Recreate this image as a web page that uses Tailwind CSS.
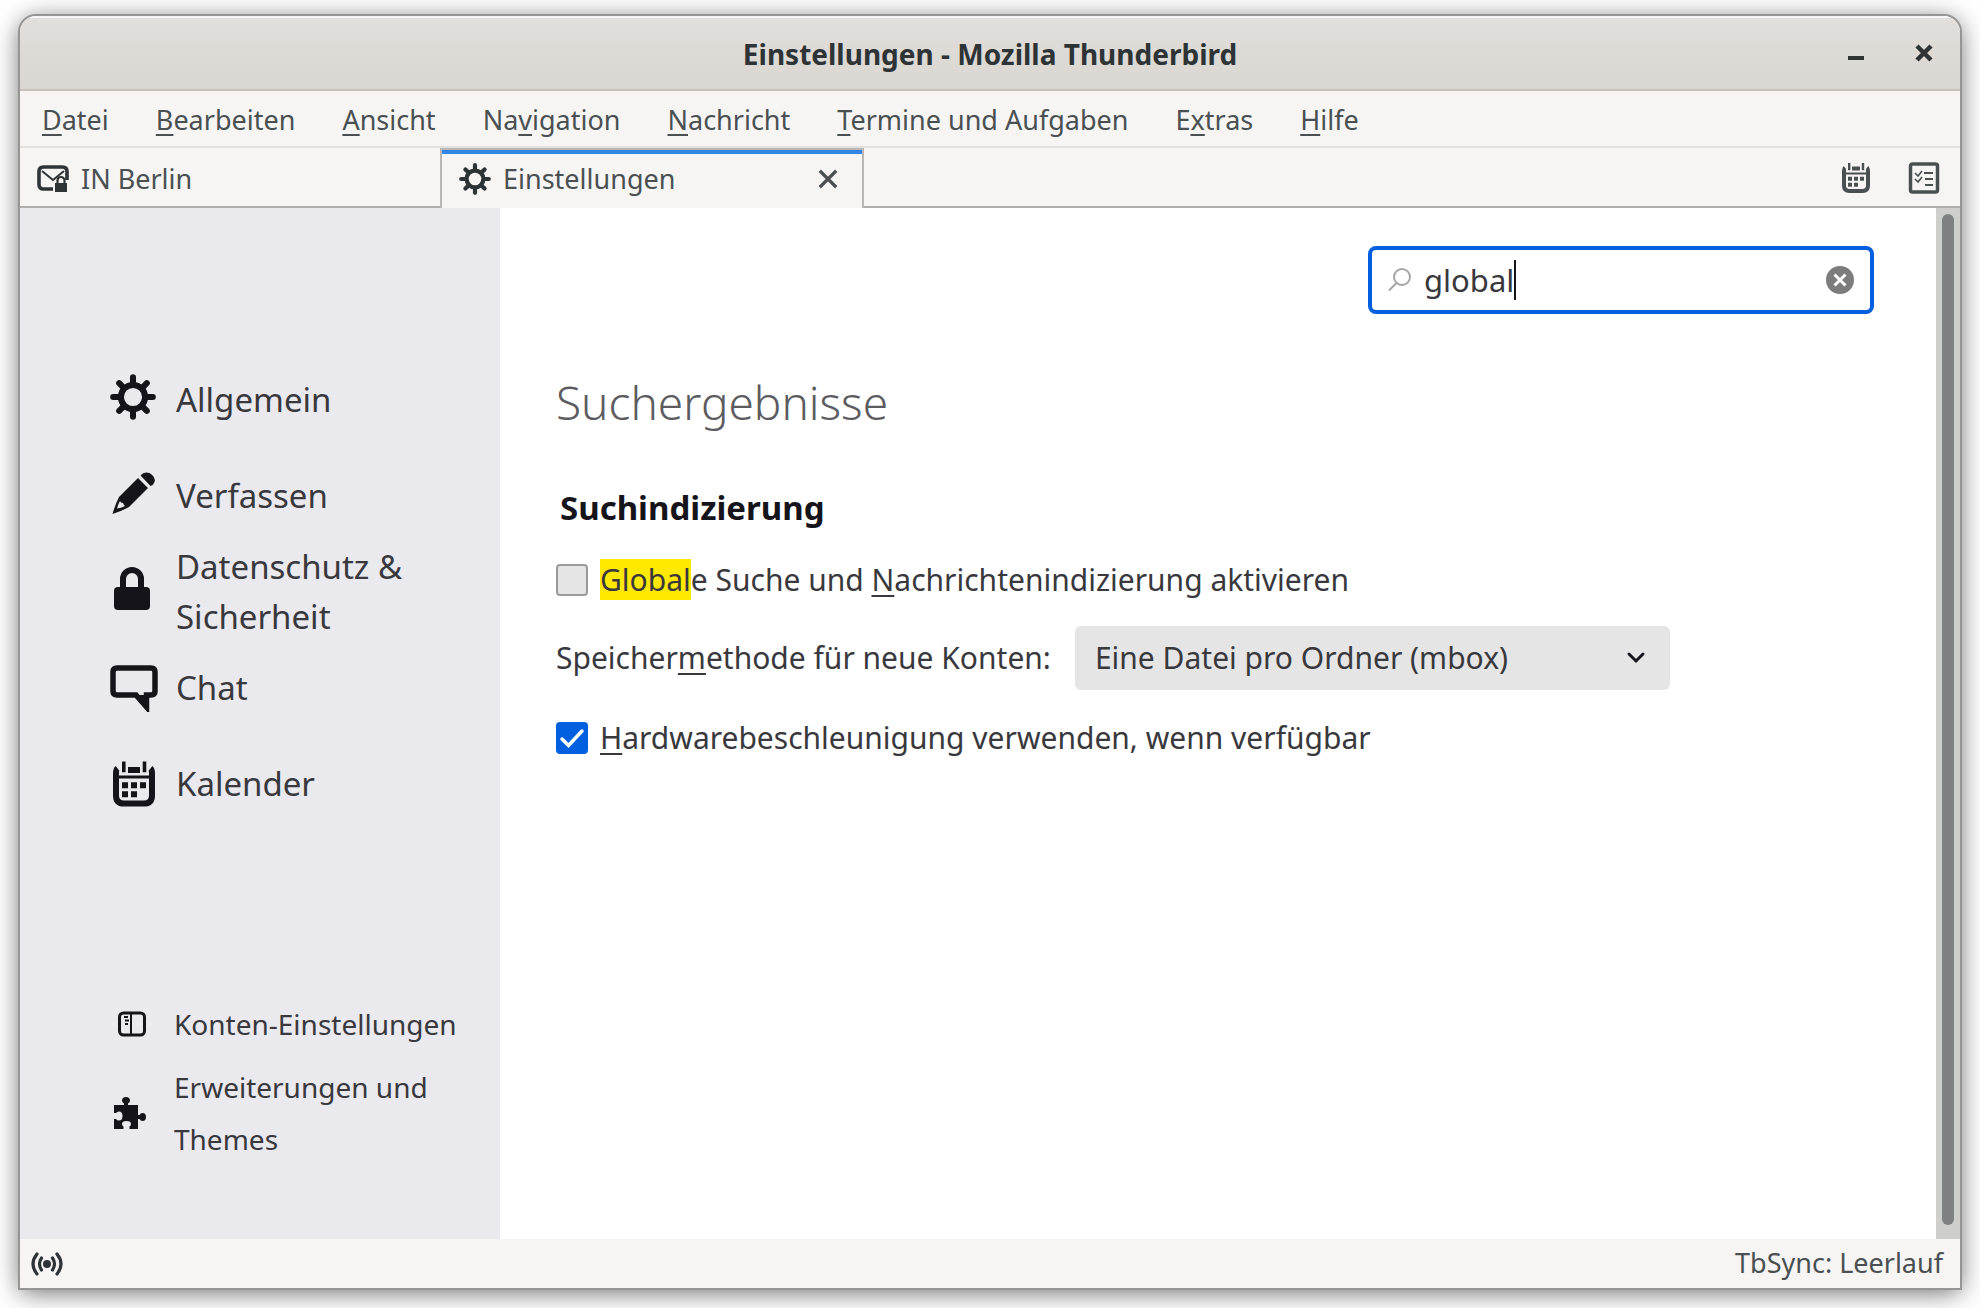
<!DOCTYPE html>
<html lang="de">
<head>
  <meta charset="UTF-8">
  <meta name="viewport" content="width=device-width, initial-scale=1.0">
  <title>Einstellungen - Mozilla Thunderbird</title>
  <script src="https://cdn.jsdelivr.net/npm/@tailwindcss/browser@4"></script>
</head>
<body class="min-h-screen flex flex-col bg-white px-5 pt-4 pb-5 font-['Noto_Sans',sans-serif] text-[27px] text-[#4a5052]">

  <!-- Shared symbols -->
  <svg class="hidden">
    <symbol id="gear" viewBox="0 0 16 16">
      <g fill="none" stroke="currentColor" stroke-width="2.1">
        <circle cx="8" cy="8" r="4.2"/>
        <path stroke-linecap="round" d="M8 3.500V1.100M8 12.500V14.900M3.500 8H1.100M12.500 8H14.900M4.800 4.800L3.200 3.200M11.200 4.800L12.800 3.200M4.800 11.200L3.200 12.800M11.200 11.200L12.800 12.800"/>
      </g>
    </symbol>
    <symbol id="calendar" viewBox="0 0 16 16">
      <path fill="none" stroke="currentColor" stroke-width="2" d="M2.500 2.800C2 3.200 2 3.800 2 4.500V11.800Q2 14.500 4.700 14.500H11.300Q14 14.500 14 11.800V4.500C14 3.800 14 3.200 13.500 2.800"/>
      <path fill="currentColor" d="M2 5.200h12v1H2zM4 .5h1.200v3.600H4zM10.900 .5h1.200v3.600h-1.200zM6 2.300h4v2H6zM4 7.400h2v2H4zM7 7.400h2v2H7zM10 7.400h2v2h-2zM4 10.400h2v2H4zM7 10.400h2v2H7z"/>
    </symbol>
  </svg>

  <div class="flex-1 flex flex-col rounded-t-2xl overflow-hidden bg-[#f6f5f4] ring-2 ring-[#959593] shadow-[0_4px_26px_rgba(0,0,0,0.6)]">

    <!-- Title bar -->
    <header class="h-[75px] shrink-0 grid grid-cols-[1fr_auto_1fr] items-center border-t-2 border-t-[#f7f6f5] border-b-2 border-b-[#c8c1b9] bg-linear-to-b from-[#e1dedb] to-[#dad7d2] text-[#2e3436]">
      <h1 class="col-start-2 text-[28px] font-bold">Einstellungen - Mozilla Thunderbird</h1>
      <div class="flex items-center justify-end gap-12 pr-[26px]">
        <button aria-label="Minimieren"><svg class="size-5" viewBox="0 0 20 20"><path d="M2 12h16v4H2z" fill="currentColor"/></svg></button>
        <button aria-label="Schließen"><svg class="size-5" viewBox="0 0 20 20"><path d="M3 2L17 16M17 2L3 16" stroke="currentColor" stroke-width="4.500"/></svg></button>
      </div>
    </header>

    <!-- Menu -->
    <nav class="h-[57px] shrink-0 flex items-center gap-[47px] px-[22px] pt-1 border-b-2 border-[#e3e1de] whitespace-nowrap">
      <a href="#"><u class="decoration-2 underline-offset-4">D</u>atei</a>
      <a href="#"><u class="decoration-2 underline-offset-4">B</u>earbeiten</a>
      <a href="#"><u class="decoration-2 underline-offset-4">A</u>nsicht</a>
      <a href="#">Na<u class="decoration-2 underline-offset-4">v</u>igation</a>
      <a href="#"><u class="decoration-2 underline-offset-4">N</u>achricht</a>
      <a href="#"><u class="decoration-2 underline-offset-4">T</u>ermine und Aufgaben</a>
      <a href="#">E<u class="decoration-2 underline-offset-4">x</u>tras</a>
      <a href="#"><u class="decoration-2 underline-offset-4">H</u>ilfe</a>
    </nav>

    <!-- Tabs -->
    <div class="h-[60px] shrink-0 flex">
      <button class="w-[420px] flex items-center gap-3 px-[17px] pt-1 border-b-2 border-[#b0aeab]">
        <svg class="size-8 text-[#2e3436]" viewBox="0 0 32 32">
          <path d="M16 26H6.500Q2 26 2 21.500V8.500Q2 4 6.500 4H25.500Q30 4 30 8.500V17" fill="none" stroke="currentColor" stroke-width="3.600"/>
          <path d="M5 8L16 17L27 8" fill="none" stroke="currentColor" stroke-width="2"/>
          <path d="M18 20h12v9H18z" fill="currentColor"/>
          <path d="M20.500 21v-3.500a3.500 3.500 0 0 1 7 0V21" fill="none" stroke="currentColor" stroke-width="2.200"/>
        </svg>
        IN Berlin
      </button>
      <div class="w-[424px] flex items-center gap-3 px-[17px] border-2 border-b-0 border-[#b9b7b5] shadow-[inset_0_4px_0_#3584e4]">
        <svg class="size-8 text-[#2e3436]"><use href="#gear"/></svg>
        <button>Einstellungen</button>
        <button class="ml-auto pr-[6px]" aria-label="Tab schließen"><svg class="size-[22px]" viewBox="0 0 24 24"><path d="M3 3L21 21M21 3L3 21" stroke="currentColor" stroke-width="3.500"/></svg></button>
      </div>
      <div class="flex-1 flex items-center justify-end gap-9 pr-5 pt-px border-b-2 border-[#b0aeab]">
        <button aria-label="Kalender"><svg class="size-8"><use href="#calendar"/></svg></button>
        <button aria-label="Aufgaben">
          <svg class="size-8" viewBox="0 0 32 32" fill="none" stroke="currentColor">
            <rect x="2.500" y="2" width="27" height="28" rx="2" stroke-width="3.500"/>
            <path d="M16 11h9M17 17h8M17 23h8" stroke-width="2.200"/>
            <path d="M7 11l3 3 4-5M7 17l3 3 4-5" stroke-width="1.600"/>
          </svg>
        </button>
      </div>
    </div>

    <div class="flex-1 flex">
      <!-- Categories -->
      <aside class="w-[480px] shrink-0 flex flex-col justify-between bg-[#eae9ee] pt-[144px] pb-[74px] text-[#38383d]">
        <nav class="text-[33px] leading-[50px]">
          <a href="#" class="h-24 flex items-center gap-5 pl-[90px]">
            <svg class="size-[46px] mb-1.5 shrink-0 text-[#15141a]"><use href="#gear"/></svg>
            Allgemein
          </a>
          <a href="#" class="h-24 flex items-center gap-5 pl-[90px]">
            <svg class="size-[46px] mb-1.5 shrink-0 text-[#15141a]" viewBox="0 0 46 46" fill="currentColor">
              <path d="M28 8L38 18L19 37Q12 41 2.500 44Q5 35 9 27ZM10 31Q8 34 7 38.500Q11 38 15 36Q13 34 13 33Q10.500 33 10 31Z" fill-rule="evenodd"/>
              <path d="M30.500 5.500Q34 1 39.500 3Q46 7 44.500 12Q43.500 15 40.500 16Z"/>
            </svg>
            Verfassen
          </a>
          <a href="#" class="h-24 flex items-center gap-5 pl-[90px]">
            <svg class="size-[46px] mb-1.5 shrink-0 text-[#15141a]" viewBox="0 0 46 46">
              <rect x="4" y="21" width="36" height="23" rx="4" fill="currentColor"/>
              <path d="M13 23V13a9 9 0 0 1 18 0V23" fill="none" stroke="currentColor" stroke-width="6"/>
            </svg>
            Datenschutz &amp; Sicherheit
          </a>
          <a href="#" class="h-24 flex items-center gap-[18px] pl-[90px]">
            <svg class="size-12 shrink-0 text-[#15141a]" viewBox="0 0 48 48">
              <path d="M7 4H41Q45 4 45 8V27Q45 31 41 31H36.500V43L26 31H7Q3 31 3 27V8Q3 4 7 4Z" fill="none" stroke="currentColor" stroke-width="5.500"/>
              <path d="M26 31L37 44V31Z" fill="currentColor"/>
            </svg>
            Chat
          </a>
          <a href="#" class="h-24 flex items-center gap-[18px] pl-[90px]">
            <svg class="size-12 shrink-0 text-[#15141a]"><use href="#calendar"/></svg>
            Kalender
          </a>
        </nav>
        <nav class="text-[28px] leading-[52px]">
          <a href="#" class="h-[62px] mb-[6px] flex items-center gap-7 pl-[94px]">
            <svg class="size-8 shrink-0 text-[#15141a]" viewBox="0 0 32 32" fill="none" stroke="currentColor">
              <rect x="5.500" y="5" width="25" height="22" rx="4" stroke-width="3"/>
              <path d="M17 5v22" stroke-width="2"/>
              <path d="M10 9h4M11 12.500h4M11 16h3" stroke-width="1.800"/>
            </svg>
            Konten-Einstellungen
          </a>
          <a href="#" class="flex items-center gap-7 pl-[94px]">
            <svg class="size-8 shrink-0 text-[#15141a]" viewBox="0 0 32 32" fill="currentColor">
              <path d="M0 8h10V6.500Q8 5.500 8 3.500Q8 0 12 0Q16 0 16 3.500Q16 5.500 14 6.500V8h10v10h1.500Q26.500 16 28.500 16Q32 16 32 20Q32 24 28.500 24Q26.500 24 25.500 22H24v10H15.500V29.500Q17 28.500 17 27Q17 24 12.500 24Q8 24 8 27Q8 28.500 9.500 29.500V32H0V22h2Q3 23.500 5 23.500Q8.500 23.500 8.500 19Q8.500 14.500 5 14.500Q3 14.500 2 16H0Z"/>
            </svg>
            <span class="flex-1 pr-10">Erweiterungen und Themes</span>
          </a>
        </nav>
      </aside>

      <!-- Preferences -->
      <main class="flex-1 bg-white pl-14 pr-[62px] pt-[38px] text-[30px] leading-10 text-[#38383d]">
        <div class="ml-auto w-[506px] h-[68px] flex items-center rounded-lg border-4 border-[#0060df] px-4">
          <svg class="size-6 shrink-0 mr-3 text-[#a5a5a8]" viewBox="0 0 24 24" fill="none" stroke="currentColor" stroke-width="2">
            <circle cx="14" cy="9" r="8"/><path d="M8.500 15L1 22.500"/>
          </svg>
          <input type="text" value="global" aria-label="In Einstellungen suchen" class="field-sizing-content text-[31px] outline-none caret-transparent">
          <span class="w-[2px] h-10 bg-[#15141a]"></span>
          <button class="ml-auto" aria-label="Suche leeren">
            <svg class="size-7" viewBox="0 0 28 28"><circle cx="14" cy="14" r="14" fill="#7c7c7d"/><path d="M8.500 8.500L19.500 19.500M19.500 8.500L8.500 19.500" stroke="#fff" stroke-width="3"/></svg>
          </button>
        </div>

        <h2 class="mt-14 text-[46px] leading-[64px] font-light text-[#5b5b60]">Suchergebnisse</h2>

        <h3 class="mt-[54px] ml-1 text-[33px] font-bold text-[#15141a]">Suchindizierung</h3>

        <div class="mt-8 flex items-center gap-3">
          <input id="globalSearch" type="checkbox" class="appearance-none size-8 rounded-sm border-2 border-[#9a9a9c] bg-[#e5e5e6]">
          <label for="globalSearch"><mark class="bg-[#ffe900] text-inherit">Global</mark>e Suche und <u class="decoration-2 underline-offset-4">N</u>achrichtenindizierung aktivieren</label>
        </div>

        <div class="mt-[26px] flex items-center gap-6">
          <label for="storage">Speicher<u class="decoration-2 underline-offset-4">m</u>ethode für neue Konten:</label>
          <div class="relative w-[595px]">
            <select id="storage" class="appearance-none w-full h-16 rounded-md bg-[#e5e5e5] pl-5 pr-16">
              <option>Eine Datei pro Ordner (mbox)</option>
            </select>
            <svg class="absolute right-6 top-[22px] size-5 pointer-events-none text-[#15141a]" viewBox="0 0 20 20"><path d="M3 6L10 13L17 6" fill="none" stroke="currentColor" stroke-width="3" stroke-linecap="round"/></svg>
          </div>
        </div>

        <div class="mt-7 flex items-center gap-3">
          <span class="relative size-8">
            <input id="hardware" type="checkbox" checked class="block appearance-none size-8 rounded-sm bg-[#0060df]">
            <svg class="absolute inset-0 size-8 pointer-events-none" viewBox="0 0 32 32"><path d="M6 17L12.500 23.500L26 9" fill="none" stroke="#fff" stroke-width="3.500" stroke-linecap="round"/></svg>
          </span>
          <label for="hardware"><u class="decoration-2 underline-offset-4">H</u>ardwarebeschleunigung verwenden, wenn verfügbar</label>
        </div>
      </main>

      <!-- Scrollbar -->
      <div class="w-6 flex bg-[#cececd] px-[6px] pt-[6px] pb-[14px]">
        <div class="flex-1 rounded-full bg-[#7e8182]"></div>
      </div>
    </div>

    <!-- Status bar -->
    <footer class="h-[49px] shrink-0 flex items-center justify-between pl-[11px] pr-[17px]">
      <svg class="w-8 h-6 text-[#2e3436]" viewBox="0 0 32 24" fill="none" stroke="currentColor" stroke-width="3.200" stroke-linecap="round">
        <circle cx="16" cy="12" r="4" fill="currentColor" stroke="none"/>
        <path d="M10.500 6Q6.500 12 10.500 18M21.500 6Q25.500 12 21.500 18M6 2Q-2 12 6 22M26 2Q34 12 26 22"/>
      </svg>
      <span>TbSync: Leerlauf</span>
    </footer>
  </div>

</body>
</html>
